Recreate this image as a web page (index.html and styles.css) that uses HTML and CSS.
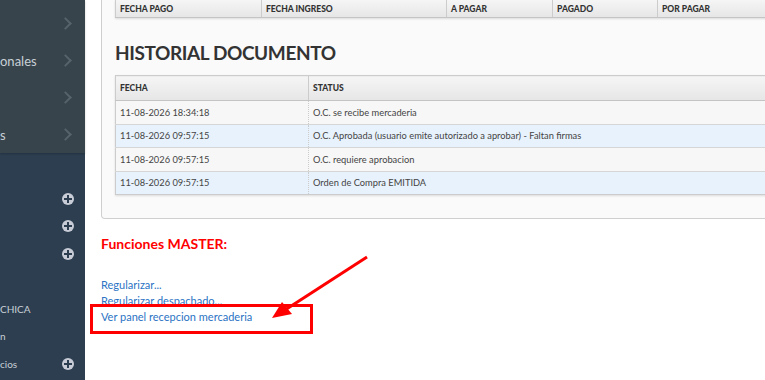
FILE: index.html
```html
<!DOCTYPE html>
<html lang="es">
<head>
    <meta charset="UTF-8">
    <title>Orden de Compra</title>
    <link rel="stylesheet" href="styles.css">
</head>
<body>
    <div class="sidebar">
        <div class="side-top">
            <div class="side-item"><span class="side-label"></span><span class="chev"></span></div>
            <div class="side-item"><span class="side-label">onales</span><span class="chev"></span></div>
            <div class="side-item"><span class="side-label"></span><span class="chev"></span></div>
            <div class="side-item"><span class="side-label">s</span><span class="chev"></span></div>
        </div>
        <div class="side-bottom">
            <div class="side-sub"><span class="side-label"></span><span class="plus"></span></div>
            <div class="side-sub"><span class="side-label"></span><span class="plus"></span></div>
            <div class="side-sub"><span class="side-label"></span><span class="plus"></span></div>
            <div class="side-sub"><span class="side-label"></span></div>
            <div class="side-sub"><span class="side-label">CHICA</span></div>
            <div class="side-sub"><span class="side-label">n</span></div>
            <div class="side-sub"><span class="side-label">cios</span><span class="plus"></span></div>
        </div>
    </div>

    <div class="main">
        <div class="panel">
            <table class="grid pagos">
                <thead>
                    <tr>
                        <th class="c1">FECHA PAGO</th>
                        <th class="c2">FECHA INGRESO</th>
                        <th class="c3">A PAGAR</th>
                        <th class="c4">PAGADO</th>
                        <th>POR PAGAR</th>
                    </tr>
                </thead>
            </table>

            <h2 class="title">HISTORIAL DOCUMENTO</h2>

            <table class="grid historial">
                <thead>
                    <tr>
                        <th class="h1">FECHA</th>
                        <th>STATUS</th>
                    </tr>
                </thead>
                <tbody>
                    <tr><td>11-08-2026 18:34:18</td><td>O.C. se recibe mercaderia</td></tr>
                    <tr><td>11-08-2026 09:57:15</td><td>O.C. Aprobada (usuario emite autorizado a aprobar) - Faltan firmas</td></tr>
                    <tr><td>11-08-2026 09:57:15</td><td>O.C. requiere aprobacion</td></tr>
                    <tr><td>11-08-2026 09:57:15</td><td>Orden de Compra EMITIDA</td></tr>
                </tbody>
            </table>
        </div>

        <div class="master">
            <h3 class="master-title">Funciones MASTER:</h3>
            <div class="master-links">
                <a href="#">Regularizar...</a>
                <a href="#">Regularizar despachado...</a>
                <a href="#">Ver panel recepcion mercaderia</a>
            </div>
        </div>
    </div>

    <!-- annotation drawn over the screenshot -->
    <svg class="markup" width="765" height="380" viewBox="0 0 765 380">
        <rect x="91.5" y="305.5" width="220" height="27" fill="none" stroke="#ff0000" stroke-width="3"/>
        <line x1="367" y1="257" x2="285" y2="310" stroke="#ff0000" stroke-width="3"/>
        <polygon points="272,318 282,302 292,314" fill="#ff0000"/>
    </svg>
</body>
</html>
```

FILE: styles.css
```css
body {
    margin: 0;
    height: 380px;
    overflow: hidden;
    display: flex;
    font-family: Lato, "Open Sans", sans-serif;
    background-color: #ffffff;
}

/* sidebar */
.sidebar {
    width: 85px;
    flex-shrink: 0;
    display: flex;
    flex-direction: column;
    background-color: #2c3e50;
    color: #c9d0d6;
}

.side-top {
    height: 148px;
    padding-top: 5px;
    background-color: #37444c;
    box-shadow: 0 1px 2px rgba(0, 0, 0, 0.2);
}

.side-item {
    height: 37px;
    display: flex;
    align-items: center;
    justify-content: space-between;
    padding-right: 12px;
    font-size: 13px;
}

.chev {
    width: 7px;
    height: 7px;
    border-top: 2px solid #56636b;
    border-right: 2px solid #56636b;
    transform: rotate(45deg);
    margin-right: 3px;
}

.side-bottom {
    padding-top: 32px;
}

.side-sub {
    height: 27.5px;
    display: flex;
    align-items: center;
    justify-content: space-between;
    padding-right: 11px;
    font-size: 10px;
}

.plus {
    position: relative;
    width: 12px;
    height: 12px;
    border-radius: 50%;
    background-color: #c7ccd6;
}

.plus::before,
.plus::after {
    content: "";
    position: absolute;
    background-color: #2c3e50;
}

.plus::before {
    left: 2px;
    top: 5px;
    width: 8px;
    height: 2px;
}

.plus::after {
    left: 5px;
    top: 2px;
    width: 2px;
    height: 8px;
}

/* main content */
.main {
    flex: 1;
    overflow: hidden;
    padding-left: 16px;
}

.panel {
    width: 700px;
    padding: 0 13px 23px 13px;
    background-color: #fafafa;
    border: 1px solid #cfcfcf;
    border-top: none;
    border-radius: 0 0 4px 4px;
}

.grid {
    width: 100%;
    border-collapse: collapse;
    border: 1px solid #cccccc;
    box-shadow: 0 1px 2px rgba(0, 0, 0, 0.12);
    table-layout: fixed;
}

.grid th {
    text-align: left;
    font-size: 8.5px;
    font-weight: 900;
    color: #333333;
    padding: 0 4px;
    background: linear-gradient(#f5f5f5, #e6e6e6);
    border-left: 1px solid #cccccc;
    border-bottom: 1px solid #c4c4c4;
}

.pagos th {
    height: 17px;
    border-top: none;
}

.pagos {
    border-top: none;
}

.pagos .c1 { width: 137px; }
.pagos .c2 { width: 176px; }
.pagos .c3 { width: 97px; }
.pagos .c4 { width: 96px; }

.title {
    margin: 23px 0 10px 0;
    font-size: 19px;
    font-weight: 700;
    letter-spacing: -0.4px;
    color: #333333;
    line-height: 24px;
}

.historial th {
    height: 24px;
}

.historial .h1 {
    width: 184px;
}

.historial td {
    height: 22.5px;
    padding: 0 4px;
    font-size: 9.3px;
    color: #444444;
    background-color: #f7f7f7;
    border-top: 1px solid #d6d6d6;
}

.historial td + td {
    border-left: 1px dotted #cccccc;
}

.historial tbody tr:nth-child(even) td {
    background-color: #e8f2fc;
}

/* master functions */
.master-title {
    margin: 16px 0 25px 0;
    font-size: 14px;
    font-weight: 700;
    color: #ff0000;
}

.master-links {
    display: flex;
    flex-direction: column;
    align-items: flex-start;
}

.master-links a {
    font-size: 11px;
    line-height: 16px;
    color: #2b73c4;
    text-decoration: none;
}

.markup {
    position: absolute;
    left: 0;
    top: 0;
    pointer-events: none;
}
```
